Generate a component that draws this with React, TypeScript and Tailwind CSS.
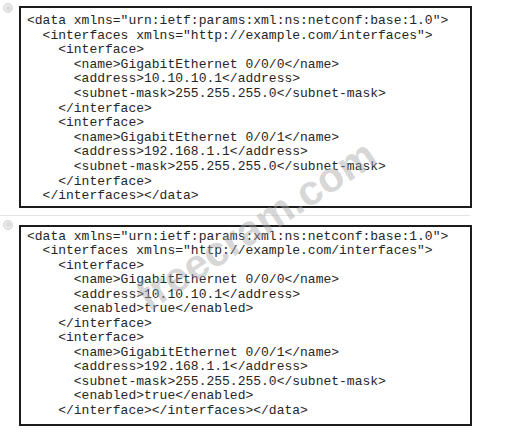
const optionA = [
  '<data xmlns="urn:ietf:params:xml:ns:netconf:base:1.0">',
  '  <interfaces xmlns="http://example.com/interfaces">',
  "    <interface>",
  "      <name>GigabitEthernet 0/0/0</name>",
  "      <address>10.10.10.1</address>",
  "      <subnet-mask>255.255.255.0</subnet-mask>",
  "    </interface>",
  "    <interface>",
  "      <name>GigabitEthernet 0/0/1</name>",
  "      <address>192.168.1.1</address>",
  "      <subnet-mask>255.255.255.0</subnet-mask>",
  "    </interface>",
  "  </interfaces></data>",
];

const optionB = [
  '<data xmlns="urn:ietf:params:xml:ns:netconf:base:1.0">',
  '  <interfaces xmlns="http://example.com/interfaces">',
  "    <interface>",
  "      <name>GigabitEthernet 0/0/0</name>",
  "      <address>10.10.10.1</address>",
  "      <enabled>true</enabled>",
  "    </interface>",
  "    <interface>",
  "      <name>GigabitEthernet 0/0/1</name>",
  "      <address>192.168.1.1</address>",
  "      <subnet-mask>255.255.255.0</subnet-mask>",
  "      <enabled>true</enabled>",
  "    </interface></interfaces></data>",
];

const Radio = () => (
  <div className="w-[10px] h-[10px] shrink-0 rounded-full border border-[#d4d4d4] bg-[#ececec] flex items-center justify-center">
    <div className="w-[5px] h-[5px] rounded-full bg-[#dcdcdc]" />
  </div>
);

const CodeBox = ({ lines, pad }: { lines: string[]; pad: string }) => (
  <div
    className={`ml-[6px] w-[453px] border-2 border-[#1c1c1c] bg-white pl-[6px] ${pad} text-[13px] text-[#262626] whitespace-pre`}
    style={{ fontFamily: '"Liberation Mono", "Courier New", monospace' }}
  >
    {lines.map((line, i) => (
      <div key={i}>{line}</div>
    ))}
  </div>
);

export default function App() {
  return (
    <div className="relative w-[508px] h-[437px] bg-white overflow-hidden">
      {/* option 1 */}
      <div className="flex items-start pl-[3px] pt-[3px]">
        <Radio />
        <div className="mt-[3px]">
          <CodeBox lines={optionA} pad="pt-[6px] pb-[2px] leading-[14.6px]" />
        </div>
      </div>

      {/* divider */}
      <div className="mt-[7px] w-[470px] h-px bg-[#e4e4e4]" />

      {/* option 2 */}
      <div className="flex items-start pl-[3px] pt-[4px]">
        <Radio />
        <div className="mt-[5px]">
          <CodeBox lines={optionB} pad="pt-[3px] pb-[6px] leading-[14.5px]" />
        </div>
      </div>

      {/* watermark */}
      <div
        className="absolute left-[256px] top-[225px] -translate-x-1/2 -translate-y-1/2 -rotate-[33deg] text-[42px] font-bold whitespace-nowrap text-[rgba(165,165,165,0.45)] pointer-events-none"
        style={{ fontFamily: '"Liberation Sans", Arial, sans-serif' }}
      >
        freecram.com
      </div>
    </div>
  );
}
